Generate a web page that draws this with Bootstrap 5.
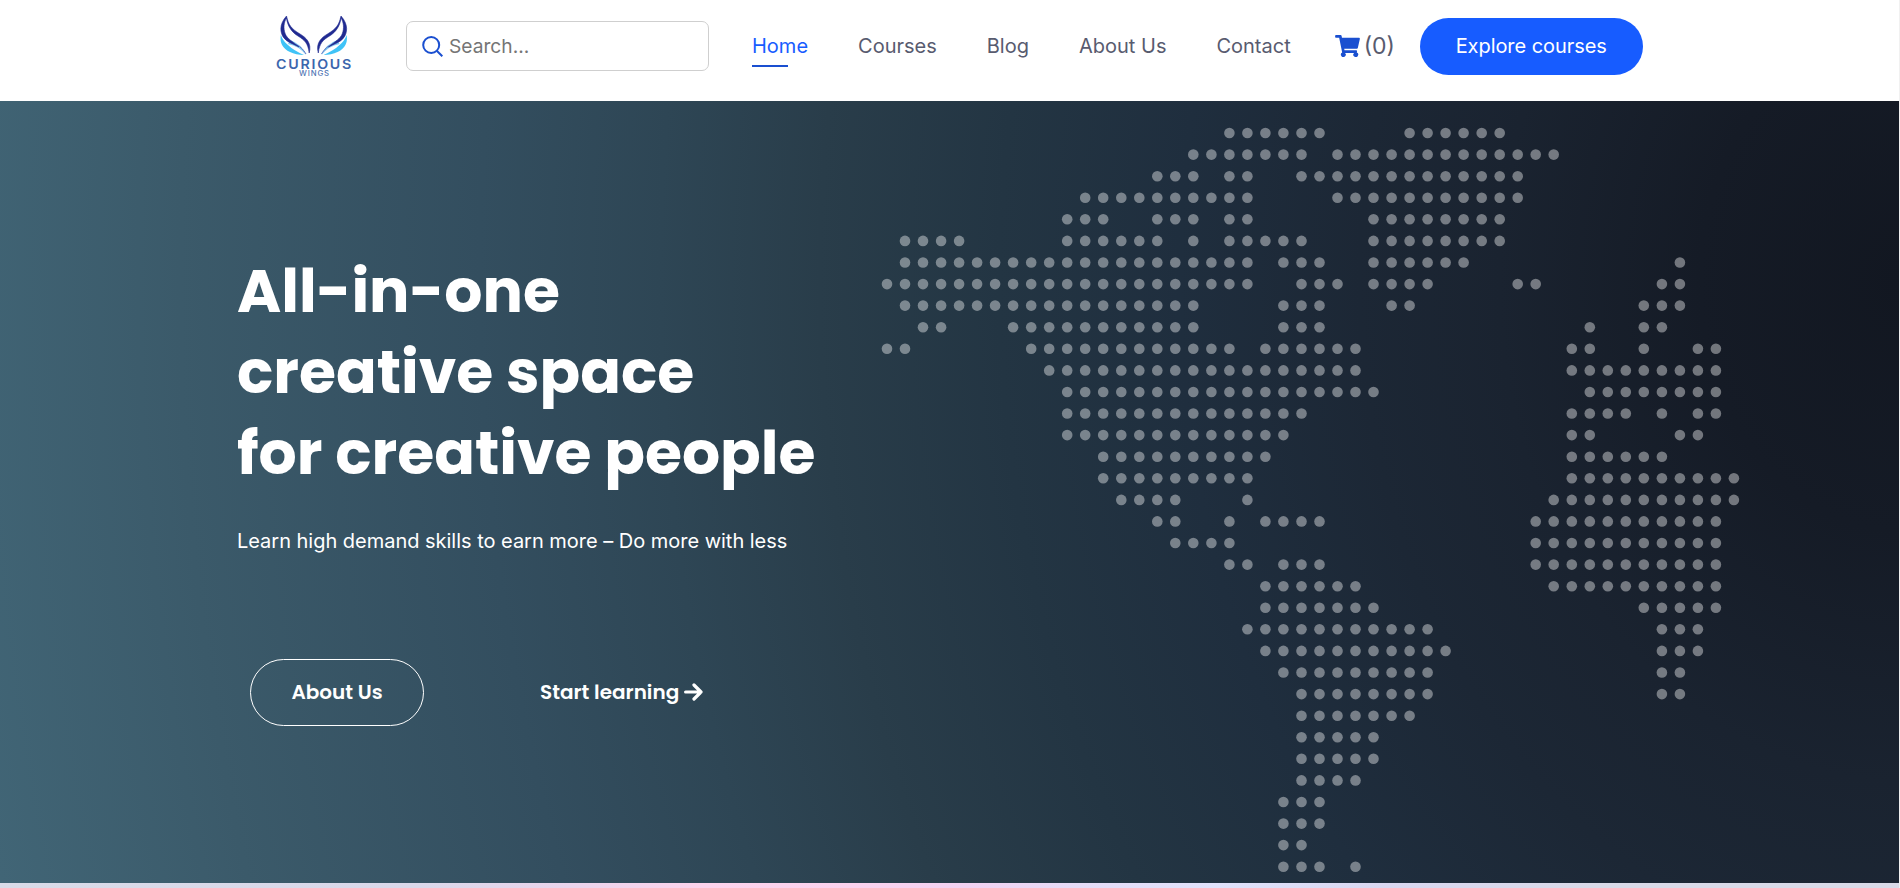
<!DOCTYPE html>
<html lang="en">
<head>
<meta charset="utf-8">
<meta name="viewport" content="width=device-width, initial-scale=1">
<title>Curious Wings</title>
<link href="https://cdn.jsdelivr.net/npm/bootstrap@5.3.0/dist/css/bootstrap.min.css" rel="stylesheet">
<style>
body{font-family:Inter,sans-serif;font-size:20px;color:#585b6f;background:#fff;height:888px;overflow:hidden;border-right:1px solid #f1f1f1}
.site-header{height:101px;padding-left:275px}
.brand{width:79px;height:66px;margin-top:13px}
.search-box{width:303px;height:50px;margin:21px 0 0 52px;border:1px solid #cfcfcf;border-radius:7px;padding-left:15px}
.search-box input{width:240px;outline:0;font-size:19.2px;margin-left:6px;color:#757575}
.search-box input::placeholder{color:#757575;opacity:1}
.main-nav{margin:21px 0 0 43px;height:50px;gap:50px}
.main-nav .nav-link{padding:0;color:#585b6f;line-height:50px;white-space:nowrap}
.main-nav .nav-link.active{color:#175cff;box-shadow:none;background:linear-gradient(#1a4fd0,#1a4fd0) 0 44px/36px 2px no-repeat}
.cart{margin:21px 0 0 44px;height:50px;gap:4px;font-size:23px;width:85px}
.btn-explore{background:#175cff;color:#fff;width:223px;height:57px;border-radius:29px;margin-top:18px;font-size:20px;letter-spacing:-.06px;padding:0 0 2px}
.hero{height:782px;background:radial-gradient(ellipse 2000px 2500px at 1900px 180px,#121721 0%,#151b26 10%,#1a2330 20%,#1c2735 27%,#1f2e3e 36%,#233543 45%,#293d4a 54%,#2e4655 62%,#334e5f 71%,#3b5a6a 86%,#426778 100%)}
.hero-copy{width:877px;padding:150px 0 0 237px}
h1{font-family:Poppins,Inter,sans-serif;font-weight:700;font-size:60px;line-height:81px;color:#fff;margin:0;white-space:nowrap}
.hero-copy p{font-size:20px;line-height:30px;margin:32px 0 0;color:#fff;white-space:nowrap;letter-spacing:-.02px}
.actions{margin:103px 0 0 13px;gap:116px;font-family:Poppins,Inter,sans-serif}
.actions .btn{font-weight:600;font-size:20px;color:#fff;padding:0 0 2px;white-space:nowrap}
.actions .btn-about{width:174px;height:67px;border:1px solid #fff;border-radius:34px}
.arrow{margin-left:5px}
.map{width:880px;height:782px}
.strip{height:5px;background:linear-gradient(90deg,#d9dbe8 0,#dad8ea 22%,#ead4ec 30%,#fdd3ec 37%,#fbd2ee 45%,#f2d2f2 51%,#e5dcf7 57%,#e0e2fb 64%,#d9d7f0 73%,#d9dae8 84%)}
</style>
</head>
<body>
<header class="site-header d-flex align-items-start">
  <a href="#" class="brand" aria-label="Curious Wings">
  <svg class="d-block" width="79" height="66" viewBox="0 0 79 66">
    <defs><g id="wing">
      <path d="M5.800 22Q4 34 15 39Q21 42 29 42Q18 37 13 32Q8 28 5.800 22Z" fill="#3fc3f7"/>
      <path d="M13 31Q24 33 31 42Q27 31 15 27Z" fill="#5bb6ea" opacity=".75"/>
      <path d="M19 31C25 33 28 36 31 41" fill="none" stroke="#4c67bd" stroke-width=".9"/>
      <path d="M11.500 3C3.500 12 5.500 20 8.500 24.500C12 29.500 19 31 24 34C17 28 12.500 26 10.300 21C8 15 9 9 11.500 5C12.500 13 16.500 19 23 23C29.500 27 33 30 34.200 40C37 30 31 24.500 25 21C16 15.500 13.500 12 11.500 3Z" fill="#202a91" stroke="#202a91" stroke-width=".6"/>
    </g></defs>
    <use href="#wing"/><use href="#wing" transform="translate(77.5 0) scale(-1 1)"/>
    <text x="1" y="55.500" textLength="77" lengthAdjust="spacingAndGlyphs" letter-spacing="1.6" font-family="Inter" font-size="13" font-weight="600" fill="#3c66ad">CURIOUS</text>
    <text x="24" y="62.800" textLength="31" lengthAdjust="spacingAndGlyphs" letter-spacing=".8" font-family="Inter" font-size="7.2" font-weight="500" fill="#5276b5">WINGS</text>
  </svg></a>
  <form class="search-box d-flex align-items-center">
    <svg width="21" height="21" viewBox="0 0 21 21" fill="none" stroke="#1a4fd0" stroke-width="2"><circle cx="9.2" cy="9" r="8"/><path d="m15 15 5.3 5.3"/></svg>
    <input class="border-0 bg-transparent p-0" placeholder="Search..." aria-label="Search">
  </form>
  <nav class="main-nav nav flex-nowrap">
    <a class="nav-link active" href="#">Home</a><a class="nav-link" href="#">Courses</a><a class="nav-link" href="#">Blog</a><a class="nav-link" href="#">About Us</a><a class="nav-link" href="#">Contact</a>
  </nav>
  <div class="cart d-flex align-items-center flex-shrink-0">
    <svg width="25" height="22" viewBox="0 0 576 512" fill="#1a4fd0"><path d="M528 301 575 93c4-15-8-29-23-29H159l-9-45C148 8 138 0 126 0H24C11 0 0 11 0 24v16c0 13 11 24 24 24h70l70 343a56 56 0 1 0 67 9h210a56 56 0 1 0 64-10l5-25c4-15-8-29-23-29H218l-6-32h293c11 0 20-8 23-19z"/></svg>
    <span>(0)</span>
  </div>
  <button class="btn btn-explore flex-shrink-0">Explore courses</button>
</header>
<main class="hero d-flex">
  <section class="hero-copy flex-shrink-0">
    <h1>All-in-one<br>creative space<br>for creative people</h1>
    <p>Learn high demand skills to earn more – Do more with less</p>
    <div class="actions d-flex align-items-center">
      <a href="#" class="btn btn-about d-flex align-items-center justify-content-center">About Us</a>
      <a href="#" class="btn d-flex align-items-center border-0">Start learning
        <svg class="arrow" width="19" height="18" viewBox="0 0 19 18" fill="none" stroke="#fff" stroke-width="3.2" stroke-linecap="round" stroke-linejoin="round"><path d="M1.6 9H17M10 2l7 7-7 7"/></svg></a>
    </div>
  </section>
  <svg class="map flex-shrink-0" id="map" viewBox="877 101 880 782" aria-hidden="true"></svg>
</main>
<div class="strip"></div>
<script src="https://cdn.jsdelivr.net/npm/bootstrap@5.3.0/dist/js/bootstrap.bundle.min.js"></script>
<script>
// Each row lists the ranges of columns that carry a dot.
const rows = ["19-24 29-34","17-23 25-37","15-17 19-20 23-35","11-20 25-35","10-12 15-17 19-20 27-34","1-4 10-15 17 19-23 27-34","1-20 22-24 27-32 44","0-20 23-25 27-30 35-36 43-44","1-17 22-24 28-29 42-44","2-3 7-17 22-24 39 42-43","0-1 8-19 21-26 38-39 42 45-46","9-26 38-46","10-27 39-46","10-23 38-41 43 45-46","10-22 38-39 44-45","12-21 38-43","12-20 38-47","13-16 20 37-47","15-16 19 21-24 36-46","16-19 36-46","19-20 22-24 36-46","21-26 37-46","21-27 42-46","20-30 43-45","21-31 43-45","22-30 43-44","23-30 43-44","23-29","23-27","23-27","23-26","22-24","22-24","22-23","22-24 26"];
let dots = "";
rows.forEach((row, r) => row.split(" ").forEach(s => {
  const [a, b = a] = s.split("-").map(Number);
  for (let c = a; c <= b; c++) dots += `<circle cx="${(887 + 18.02 * c).toFixed(1)}" cy="${(133 + 21.58 * r).toFixed(1)}" r="5.3"/>`;
}));
document.getElementById("map").innerHTML = `<g fill="#fff" fill-opacity=".4">${dots}</g>`;
</script>
</body>
</html>
